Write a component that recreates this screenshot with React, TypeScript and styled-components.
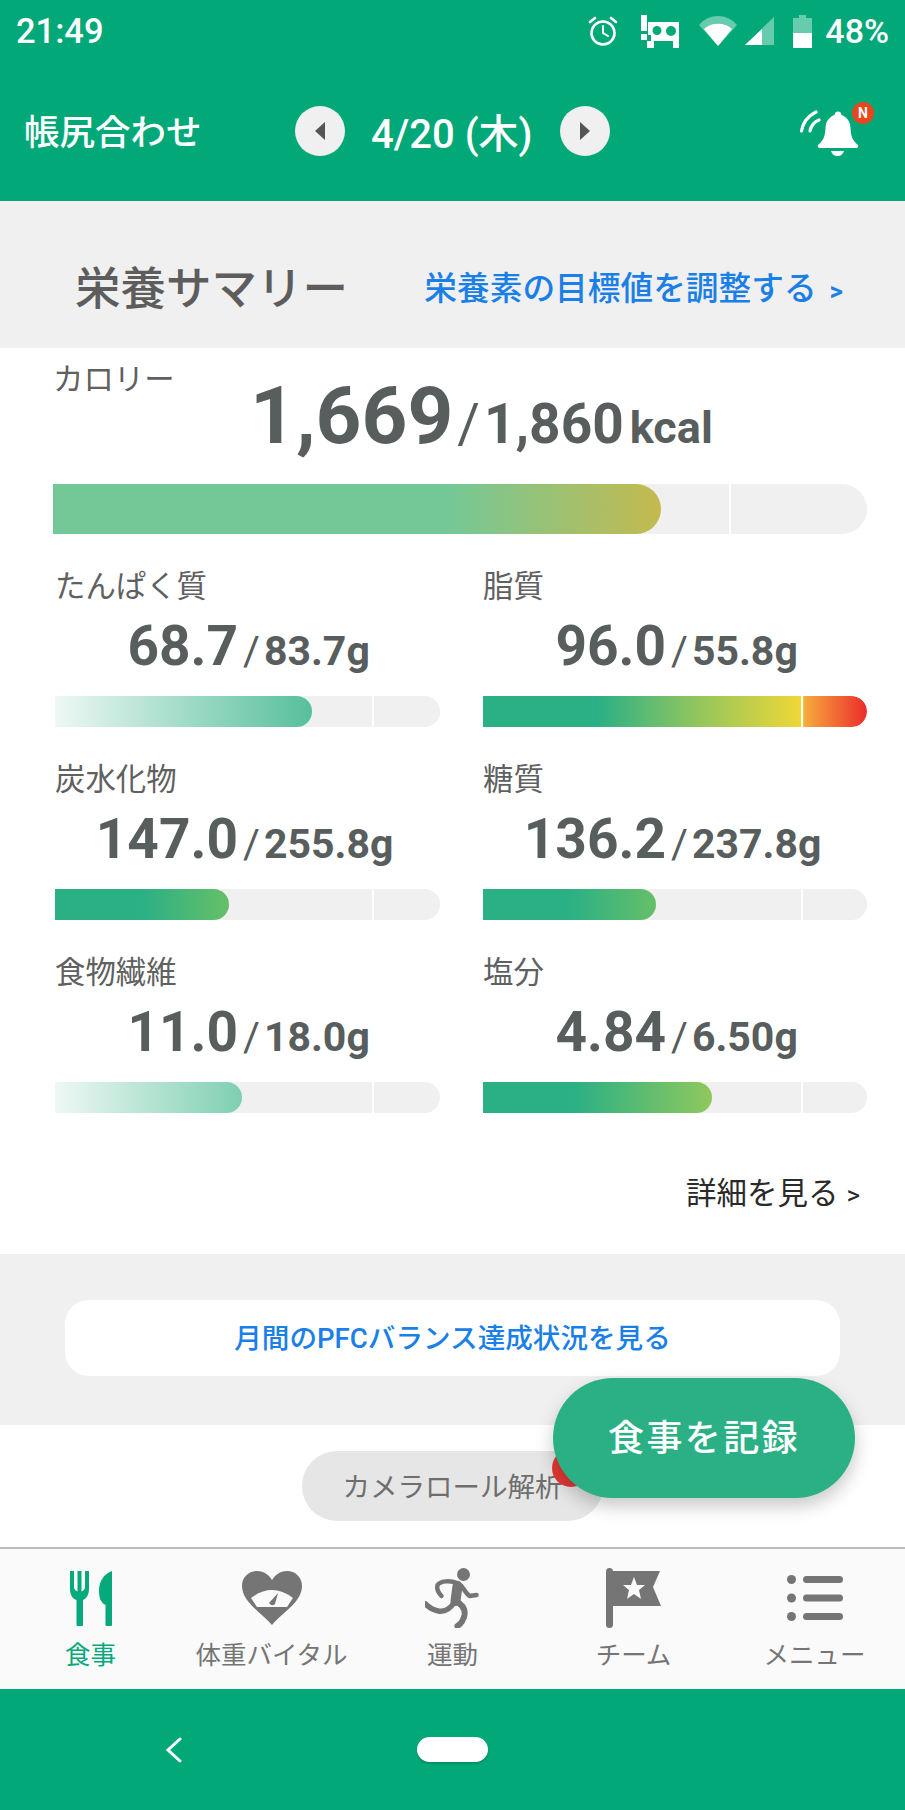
import styled, { createGlobalStyle } from "styled-components";

const GlobalStyle = createGlobalStyle`
  html, body {
    margin: 0;
    padding: 0;
    background: #fff;
  }
  body {
    font-family: Roboto, "Noto Sans CJK JP", sans-serif;
    color: #5a5f5f;
  }
`;

const GREEN = "#02a878";

const Page = styled.div`
  position: relative;
  width: 905px;
  height: 1810px;
  overflow: hidden;
  display: flex;
  flex-direction: column;
  background: #fff;
`;

const TopArea = styled.header`
  background: ${GREEN};
  color: #fff;
  height: 201px;
  flex: none;
`;

const StatusBar = styled.div`
  height: 60px;
  display: flex;
  align-items: center;
  padding: 2px 16px 0;
  box-sizing: border-box;
`;

const Time = styled.span`
  font-size: 34.5px;
  font-weight: 500;
`;

const StatusIcons = styled.div`
  margin-left: auto;
  display: flex;
  align-items: center;
`;

const StatusIcon = styled.svg<{ $gap: number }>`
  flex: none;
  display: block;
  margin-left: ${(p) => p.$gap}px;
`;

const Battery = styled.span`
  margin-left: 13px;
  font-size: 34px;
  font-weight: 500;
`;

const NavRow = styled.div`
  height: 141px;
  display: flex;
  align-items: center;
  padding: 0 45px 0 24px;
`;

const ScreenTitle = styled.h1`
  margin: 0 0 2px;
  width: 271px;
  flex: none;
  font-size: 35.5px;
  font-weight: 500;
`;

const DateNav = styled.div`
  display: flex;
  align-items: center;
  gap: 26px;
`;

const DateLabel = styled.span`
  width: 163px;
  font-size: 40px;
  font-weight: 500;
  white-space: nowrap;
`;

const ArrowButton = styled.div`
  width: 50px;
  height: 50px;
  border-radius: 50%;
  background: #f0f0f0;
  display: flex;
  align-items: center;
  justify-content: center;
`;

const Bell = styled.div`
  position: relative;
  margin-left: auto;
  width: 60px;
  height: 50px;
`;

const BellBadge = styled.span`
  position: absolute;
  right: -14px;
  top: -4px;
  width: 22px;
  height: 22px;
  border-radius: 50%;
  background: #e8461c;
  color: #fff;
  font-size: 14px;
  font-weight: 700;
  display: flex;
  align-items: center;
  justify-content: center;
`;

const SectionHead = styled.div`
  height: 147px;
  box-sizing: border-box;
  flex: none;
  background: #f0f0f0;
  display: flex;
  align-items: center;
  justify-content: space-between;
  padding: 21px 62px 0 75px;
`;

const SectionTitle = styled.h2`
  margin: 0;
  font-size: 45.5px;
  font-weight: 500;
  color: #5d5d5d;
`;

const GoalLink = styled.a`
  font-size: 32.7px;
  font-weight: 500;
  color: #1a7fe6;
  white-space: nowrap;
`;

const Chevron = styled.span`
  font-size: 26px;
  font-weight: 700;
  margin-left: 13px;
`;

const Summary = styled.section`
  height: 906px;
  flex: none;
  box-sizing: border-box;
  background: #fff;
`;

const CalorieHead = styled.div`
  height: 136px;
  display: flex;
  padding-left: 53px;
`;

const MetricLabel = styled.div`
  font-size: 30.4px;
  line-height: 40px;
  color: #5f6161;
  white-space: nowrap;
`;

const CalorieLabel = styled(MetricLabel)`
  width: 197px;
  flex: none;
  padding-top: 12px;
`;

const CalorieAmounts = styled.div`
  display: flex;
  align-items: baseline;
  line-height: 136px;
  white-space: nowrap;
  color: #585d5d;
`;

const Amount = styled.span<{ $size: number; $gap?: number; $light?: boolean }>`
  font-size: ${(p) => p.$size}px;
  font-weight: ${(p) => (p.$light ? 400 : 700)};
  margin-left: ${(p) => p.$gap ?? 0}px;
`;

const Track = styled.div<{ $height: number }>`
  position: relative;
  height: ${(p) => p.$height}px;
  background: #f0f0f0;
  border-radius: 0 ${(p) => p.$height / 2}px ${(p) => p.$height / 2}px 0;
  overflow: hidden;
`;

const Fill = styled.div<{ $gradient: string }>`
  height: 100%;
  background: ${(p) => p.$gradient};
  border-radius: 0 999px 999px 0;
`;

const GoalTick = styled.span`
  position: absolute;
  top: 0;
  bottom: 0;
  width: 2px;
  background: #fff;
`;

const CalorieBar = styled.div`
  margin: 0 38px 0 53px;
`;

const MetricGrid = styled.div`
  display: grid;
  grid-template-columns: 385px 384px;
  column-gap: 43px;
  row-gap: 33px;
  padding: 33px 0 0 55px;
`;

const Metric = styled.div`
  display: flex;
  flex-direction: column;
`;

// main figure lines up on its right edge, the goal on its left, in every cell
const MetricValue = styled.div`
  height: 89px;
  padding-bottom: 12px;
  box-sizing: border-box;
  display: grid;
  grid-template-columns: 183px 1fr;
  align-items: baseline;
  line-height: 78px;
  white-space: nowrap;
  color: #585d5d;
`;

const MainFigure = styled.span`
  font-size: 55px;
  font-weight: 700;
  justify-self: end;
`;

const GoalFigure = styled.span`
  display: flex;
  align-items: baseline;
`;

const DetailRow = styled.div`
  margin-top: 61px;
  padding-right: 45px;
  text-align: right;
  font-size: 30.5px;
  line-height: 40px;
  color: #2a2a2a;
`;

const DetailChevron = styled.span`
  font-size: 26px;
  margin-left: 8px;
`;

const MonthlyBand = styled.div`
  height: 171px;
  flex: none;
  box-sizing: border-box;
  background: #f0f0f0;
  padding: 46px 65px 0;
`;

const MonthlyButton = styled.div`
  height: 76px;
  padding-bottom: 4px;
  box-sizing: border-box;
  border-radius: 24px;
  background: #fff;
  display: flex;
  align-items: center;
  justify-content: center;
  font-size: 27.6px;
  font-weight: 500;
  color: #1a7fe6;
`;

const CameraRow = styled.div`
  height: 122px;
  flex: none;
  display: flex;
  align-items: center;
  justify-content: center;
`;

const CameraPill = styled.div`
  position: relative;
  width: 301px;
  height: 70px;
  padding-bottom: 2px;
  box-sizing: border-box;
  border-radius: 35px;
  background: #e6e6e6;
  color: #6e6e6e;
  font-size: 27.5px;
  display: flex;
  align-items: center;
  justify-content: center;
`;

const CameraBadge = styled.span`
  position: absolute;
  right: 13px;
  top: -2px;
  width: 38px;
  height: 38px;
  border-radius: 50%;
  background: #e53935;
`;

const RecordButton = styled.button`
  position: absolute;
  left: 553px;
  top: 1378px;
  width: 302px;
  height: 120px;
  padding: 0 0 6px;
  border: 0;
  border-radius: 60px;
  background: #2bb085;
  color: #fff;
  font-family: inherit;
  font-size: 36px;
  font-weight: 500;
  letter-spacing: 2.4px;
  box-shadow: 0 8px 18px rgba(0, 0, 0, 0.22);
`;

const TabBar = styled.nav`
  height: 142px;
  flex: none;
  box-sizing: border-box;
  border-top: 2px solid #bdbdbd;
  background: #fafafa;
  display: grid;
  grid-template-columns: repeat(5, 1fr);
`;

const Tab = styled.div<{ $active?: boolean }>`
  display: flex;
  flex-direction: column;
  align-items: center;
  color: ${(p) => (p.$active ? "#06a97b" : "#757575")};
`;

const TabIcon = styled.div`
  height: 88px;
  display: flex;
  align-items: center;
  justify-content: center;
  padding-top: 10px;
  box-sizing: border-box;
`;

const TabLabel = styled.span`
  font-size: 25.5px;
  line-height: 36px;
  white-space: nowrap;
`;

const SystemNav = styled.div`
  height: 121px;
  flex: none;
  background: ${GREEN};
  display: flex;
  align-items: center;
  padding: 0 0 0 165px;
`;

const HomePill = styled.div`
  width: 71px;
  height: 25px;
  margin-left: 235px;
  border-radius: 12.5px;
  background: #fff;
  box-shadow: 0 2px 2px rgba(0, 0, 0, 0.15);
`;

const metrics = [
  {
    name: "たんぱく質",
    value: "68.7",
    goal: "83.7g",
    width: 257,
    tick: 317,
    gradient: "linear-gradient(90deg, #eef8f4 0%, #56bf9c 100%)",
  },
  {
    name: "脂質",
    value: "96.0",
    goal: "55.8g",
    width: 384,
    tick: 318,
    gradient:
      "linear-gradient(90deg, #2bb085 0%, #2bb085 30%, #8fc55f 55%, #f0d736 83%, #f6a83c 84%, #ec2c2c 100%)",
  },
  {
    name: "炭水化物",
    value: "147.0",
    goal: "255.8g",
    width: 174,
    tick: 317,
    gradient: "linear-gradient(90deg, #2bb085 0%, #2bb085 50%, #66bf68 100%)",
  },
  {
    name: "糖質",
    value: "136.2",
    goal: "237.8g",
    width: 173,
    tick: 318,
    gradient: "linear-gradient(90deg, #2bb085 0%, #2bb085 50%, #66bf68 100%)",
  },
  {
    name: "食物繊維",
    value: "11.0",
    goal: "18.0g",
    width: 187,
    tick: 317,
    gradient: "linear-gradient(90deg, #eef8f4 0%, #7ecfb2 100%)",
  },
  {
    name: "塩分",
    value: "4.84",
    goal: "6.50g",
    width: 229,
    tick: 318,
    gradient: "linear-gradient(90deg, #2bb085 0%, #2bb085 40%, #8fc85c 100%)",
  },
];

function BackArrow() {
  return (
    <svg width="14" height="20" viewBox="0 0 14 20">
      <path d="M12 1 L2 10 L12 19 Z" fill="#555" />
    </svg>
  );
}

function ForwardArrow() {
  return (
    <svg width="14" height="20" viewBox="0 0 14 20">
      <path d="M2 1 L12 10 L2 19 Z" fill="#555" />
    </svg>
  );
}

function BellIcon() {
  return (
    <svg width="60" height="50" viewBox="0 0 60 50">
      <g fill="none" stroke="#fff" strokeWidth="3.2" strokeLinecap="round">
        <path d="M1.5 25 C3 16 8 10 16 6" />
        <path d="M10 25 C11 20 14 16 19 14" />
      </g>
      <path
        fill="#fff"
        d="M38 5.5 C40 5.5 41 6.5 41.5 9 C47 11 50 15 50.5 22 C51 30 52 34 58 39 Q59 42 56 42 H20 Q17 42 18 39 C24 34 25 30 25.5 22 C26 15 29 11 34.5 9 C35 6.5 36 5.5 38 5.5 Z"
      />
      <path fill="#fff" d="M31 45 H44 C43 48 41 50 37.5 50 C34 50 32 48 31 45 Z" />
    </svg>
  );
}

export default function App() {
  return (
    <>
      <GlobalStyle />
      <Page>
        <TopArea>
          <StatusBar>
            <Time>21:49</Time>
            <StatusIcons>
              <StatusIcon $gap={0} width="30" height="30" viewBox="0 0 30 30">
                <g fill="none" stroke="#fff" strokeWidth="2.6" strokeLinecap="round">
                  <circle cx="15" cy="17" r="11.5" />
                  <path d="M15 10 V17 L20 20" strokeWidth="2" />
                  <path d="M2 6 L7 2 M28 6 L23 2" />
                </g>
              </StatusIcon>
              <StatusIcon $gap={23} width="38" height="33" viewBox="0 0 38 33">
                <path
                  fill="#fff"
                  fillRule="evenodd"
                  d="M0 0 H6 V16 H0 Z M0 19 H6 V25 H0 Z M7 7 H38 V33 H32 V26 H13 V33 H6 V26 H10 V20 H7 Z M16 11 A4.5 4.5 0 1 0 16 20 A4.5 4.5 0 1 0 16 11 Z M30 11 A5 5 0 1 0 30 21 A5 5 0 1 0 30 11 Z"
                />
              </StatusIcon>
              <StatusIcon $gap={20} width="38" height="30" viewBox="0 0 38 30">
                <path fill="#fff" fillOpacity="0.4" d="M0 9 C10 -3 28 -3 38 9 L19 30 Z" />
                <path fill="#fff" d="M5 13 C12 6 26 6 33 13 L19 30 Z" />
              </StatusIcon>
              <StatusIcon $gap={8} width="29" height="28" viewBox="0 0 29 28">
                <path fill="#fff" fillOpacity="0.4" d="M29 0 V28 H0 Z" />
                <path fill="#fff" d="M17 12 V28 H0 Z" />
              </StatusIcon>
              <StatusIcon $gap={19} width="19" height="33" viewBox="0 0 19 33">
                <path fill="#fff" fillOpacity="0.4" d="M6 0 H13 V3 H19 V18 H0 V3 H6 Z" />
                <path fill="#fff" d="M0 18 H19 V33 H0 Z" />
              </StatusIcon>
              <Battery>48%</Battery>
            </StatusIcons>
          </StatusBar>
          <NavRow>
            <ScreenTitle>帳尻合わせ</ScreenTitle>
            <DateNav>
              <ArrowButton>
                <BackArrow />
              </ArrowButton>
              <DateLabel>4/20 (木)</DateLabel>
              <ArrowButton>
                <ForwardArrow />
              </ArrowButton>
            </DateNav>
            <Bell>
              <BellIcon />
              <BellBadge>N</BellBadge>
            </Bell>
          </NavRow>
        </TopArea>

        <SectionHead>
          <SectionTitle>栄養サマリー</SectionTitle>
          <GoalLink>
            栄養素の目標値を調整する<Chevron>&gt;</Chevron>
          </GoalLink>
        </SectionHead>

        <Summary>
          <CalorieHead>
            <CalorieLabel>カロリー</CalorieLabel>
            <CalorieAmounts>
              <Amount $size={80}>1,669</Amount>
              <Amount $size={55} $gap={4} $light>/</Amount>
              <Amount $size={55} $gap={4}>1,860</Amount>
              <Amount $size={45} $gap={6}>kcal</Amount>
            </CalorieAmounts>
          </CalorieHead>
          <CalorieBar>
            <Track $height={50}>
              <Fill
                $gradient="linear-gradient(90deg, #74c897 0%, #74c897 65%, #c4ba4f 100%)"
                style={{ width: 608 }}
              />
              <GoalTick style={{ left: 676 }} />
            </Track>
          </CalorieBar>

          <MetricGrid>
            {metrics.map((m) => (
              <Metric key={m.name}>
                <MetricLabel>{m.name}</MetricLabel>
                <MetricValue>
                  <MainFigure>{m.value}</MainFigure>
                  <GoalFigure>
                    <Amount $size={41} $gap={5} $light>/</Amount>
                    <Amount $size={41} $gap={4}>{m.goal}</Amount>
                  </GoalFigure>
                </MetricValue>
                <Track $height={31}>
                  <Fill $gradient={m.gradient} style={{ width: m.width }} />
                  <GoalTick style={{ left: m.tick }} />
                </Track>
              </Metric>
            ))}
          </MetricGrid>

          <DetailRow>
            詳細を見る<DetailChevron>&gt;</DetailChevron>
          </DetailRow>
        </Summary>

        <MonthlyBand>
          <MonthlyButton>月間のPFCバランス達成状況を見る</MonthlyButton>
        </MonthlyBand>

        <CameraRow>
          <CameraPill>
            カメラロール解析
            <CameraBadge />
          </CameraPill>
        </CameraRow>

        <RecordButton>食事を記録</RecordButton>

        <TabBar>
          <Tab $active>
            <TabIcon>
              <svg width="42" height="55" viewBox="0 0 42 55">
                <path
                  fill="currentColor"
                  d="M0 0 H4 V16 C4 18 5.5 20 7.5 20.5 V0 H11.5 V20.5 C13.5 20 15 18 15 16 V0 H19 V18 C19 24 16 28 13 29 V54 Q13 55 12 55 H7.5 Q6.5 55 6.5 54 V29 C3 28 0 24 0 18 Z"
                />
                <path
                  fill="currentColor"
                  d="M42 0 V54 Q42 55 41 55 H36.5 Q35.5 55 35.5 54 V34 C31 32 29 27 29 20 C29 10 34 3 42 0 Z"
                />
              </svg>
            </TabIcon>
            <TabLabel>食事</TabLabel>
          </Tab>
          <Tab>
            <TabIcon>
              <svg width="60" height="54" viewBox="0 0 60 54">
                <path
                  fill="currentColor"
                  d="M30 54 C20 42 0 31 0 15 C0 6 7 0 15 0 C22 0 27 4 30 9 C33 4 38 0 45 0 C53 0 60 6 60 15 C60 31 40 42 30 54 Z"
                />
                <path fill="#fafafa" d="M9 27 Q30 11 51 27 L45 36 H15 Z" />
                <path fill="currentColor" d="M27 32 L36 22 L33 33 Q30 36 27 32 Z" />
              </svg>
            </TabIcon>
            <TabLabel>体重バイタル</TabLabel>
          </Tab>
          <Tab>
            <TabIcon>
              <svg width="56" height="60" viewBox="1.5 0 56 60">
                <circle cx="40" cy="6.5" r="6.5" fill="currentColor" />
                <g fill="none" stroke="currentColor" strokeLinecap="round" strokeLinejoin="round">
                  <path d="M34 18 L32 33" strokeWidth="10" />
                  <path d="M34 15 C26 12 17 13 14 17 C13 21 15 25 18 28" strokeWidth="4.5" />
                  <path d="M38 18 C41 22 43 26 46 28 L53 27" strokeWidth="4.5" />
                  <path d="M31 33 C28 40 22 44 15 43 C9 42 5 39 2 36" strokeWidth="5.5" />
                  <path d="M32 33 C38 36 42 40 41 47 C40 52 37 56 34 58" strokeWidth="6" />
                </g>
              </svg>
            </TabIcon>
            <TabLabel>運動</TabLabel>
          </Tab>
          <Tab>
            <TabIcon>
              <svg width="55" height="60" viewBox="0 0 55 60">
                <rect x="0" y="0" width="7" height="60" rx="3.5" fill="currentColor" />
                <path fill="currentColor" d="M5 3 H54 L47 19 L55 38 H5 Z" />
                <path
                  fill="#fafafa"
                  d="M28 9 L31 17 L39 17 L33 22 L35 31 L28 26 L21 31 L23 22 L17 17 L25 17 Z"
                />
              </svg>
            </TabIcon>
            <TabLabel>チーム</TabLabel>
          </Tab>
          <Tab>
            <TabIcon>
              <svg width="56" height="46" viewBox="0 0 56 46">
                <g fill="currentColor">
                  <circle cx="4.5" cy="4.5" r="4.5" />
                  <circle cx="4.5" cy="23" r="4.5" />
                  <circle cx="4.5" cy="41.5" r="4.5" />
                  <rect x="16" y="1" width="40" height="7" rx="3.5" />
                  <rect x="16" y="19.5" width="40" height="7" rx="3.5" />
                  <rect x="16" y="38" width="40" height="7" rx="3.5" />
                </g>
              </svg>
            </TabIcon>
            <TabLabel>メニュー</TabLabel>
          </Tab>
        </TabBar>

        <SystemNav>
          <svg width="17" height="26" viewBox="0 0 17 26">
            <path d="M15 2 L3 13 L15 24" fill="none" stroke="#fff" strokeWidth="3" strokeLinecap="round" />
          </svg>
          <HomePill />
        </SystemNav>
      </Page>
    </>
  );
}
